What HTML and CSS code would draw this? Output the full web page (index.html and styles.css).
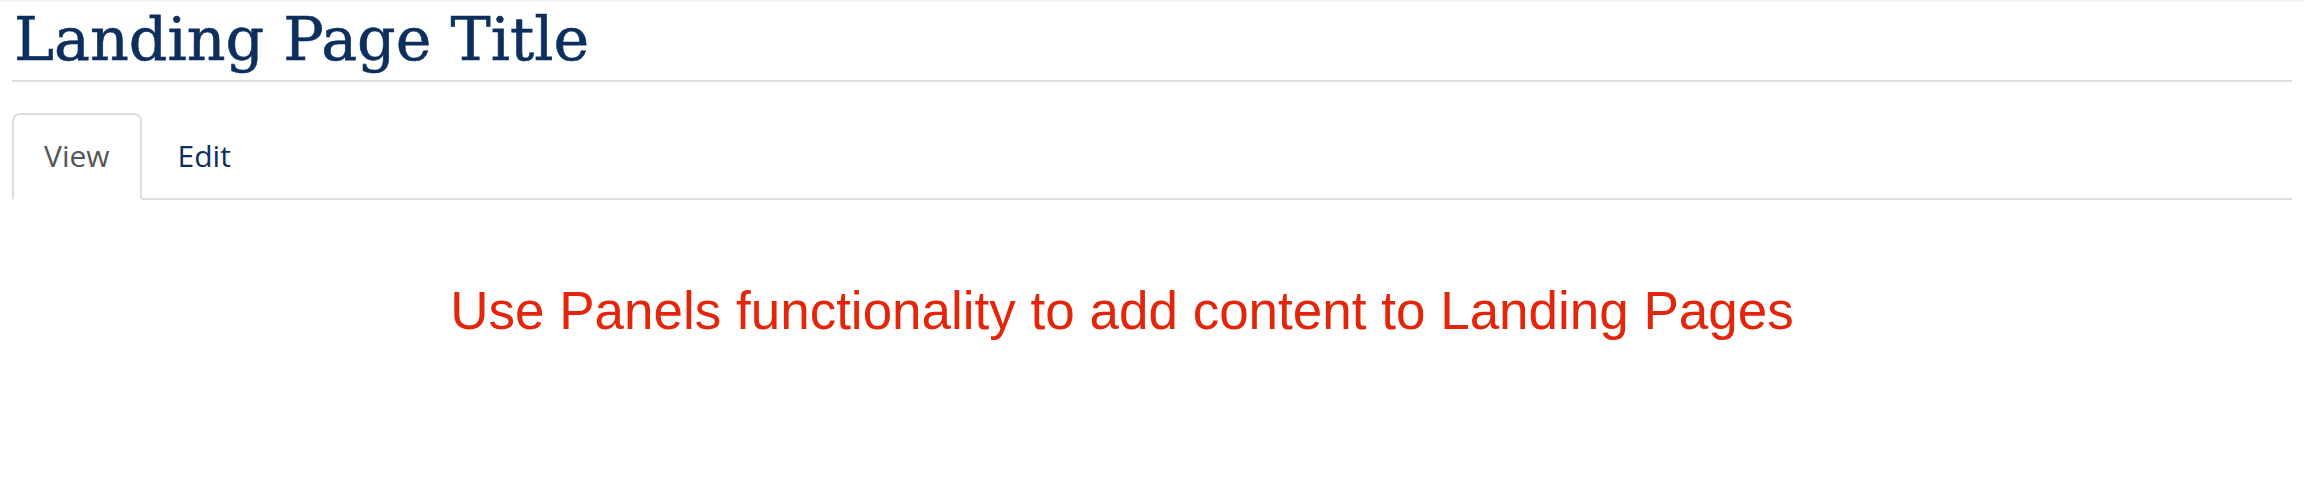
FILE: index.html
```html
<!DOCTYPE html>
<html lang="en">
<head>
  <meta charset="UTF-8">
  <meta name="viewport" content="width=device-width, initial-scale=1.0">
  <title>Landing Page Title</title>
  <link rel="stylesheet" href="styles.css">
</head>
<body>
  <div class="top-shade"></div>
  <div class="page">
    <h1 class="page-title">Landing Page Title</h1>

    <ul class="tabs">
      <li class="active"><a href="#">View</a></li>
      <li><a href="#">Edit</a></li>
    </ul>

    <div class="panel-note">Use Panels functionality to add content to Landing Pages</div>
  </div>
</body>
</html>
```

FILE: styles.css
```css
:root {
  --navy: #0c2f5e;
  --rule: #e2ded9;
  --tab-border: #dddddd;
  --alert: #e3260b;
}
* {
  box-sizing: border-box;
  margin: 0;
  padding: 0;
}
body {
  background: #ffffff;
  font-family: 'Open Sans', 'Liberation Sans', sans-serif;
}
.top-shade {
  height: 3px;
  background: linear-gradient(#efefef, #ffffff);
}
.page {
  padding: 0 12px;
}
.page-title {
  font-family: 'DejaVu Serif', 'Liberation Serif', serif;
  font-weight: normal;
  font-size: 60.3px;
  line-height: 62px;
  color: var(--navy);
  padding: 5px 0 10px 2px;
  border-bottom: 2px solid var(--rule);
  -webkit-text-stroke: 0.6px var(--navy);
}
.tabs {
  list-style: none;
  display: flex;
  margin-top: 31px;
  border-bottom: 2px solid var(--tab-border);
}
.tabs li {
  margin-bottom: -2px;
  margin-right: 4px;
}
.tabs a {
  display: block;
  padding: 20px 30px;
  font-size: 30px;
  line-height: 42.86px;
  color: var(--navy);
  text-decoration: none;
  border: 2px solid transparent;
  border-radius: 8px 8px 0 0;
}
.tabs li.active a {
  color: #555555;
  background: #ffffff;
  border-color: var(--tab-border);
  border-bottom-color: transparent;
}
.panel-note {
  margin-top: 80px;
  padding-right: 60px;
  text-align: center;
  font-family: 'Liberation Sans', Arial, sans-serif;
  font-size: 53px;
  color: var(--alert);
}
```
